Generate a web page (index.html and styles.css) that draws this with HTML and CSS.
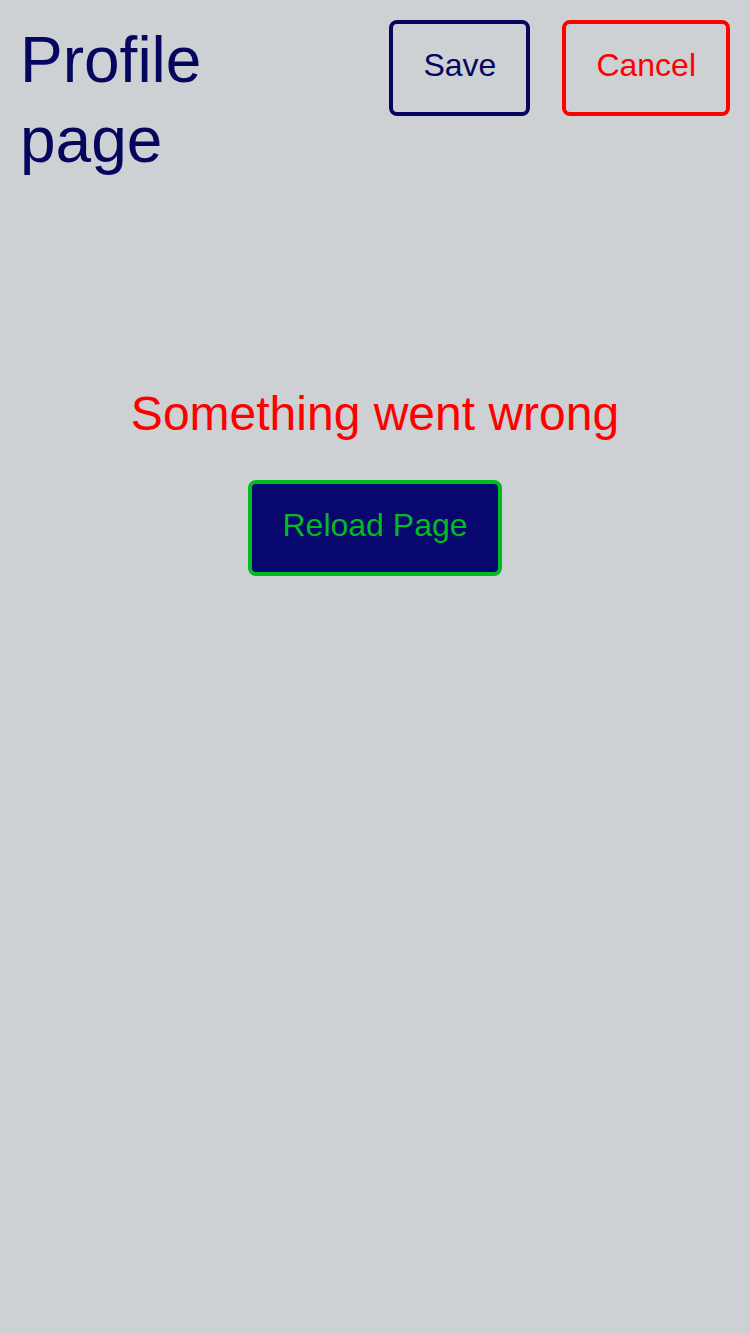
FILE: index.html
```html
<!DOCTYPE html>
<html lang="en">
<head>
<meta charset="utf-8">
<title>Profile page</title>
<link rel="stylesheet" href="styles.css">
</head>
<body>
<header class="header">
  <h1 class="title">Profile page</h1>
  <button class="btn btn-save" type="button">Save</button>
  <button class="btn btn-cancel" type="button">Cancel</button>
</header>
<main class="error">
  <p class="error-message">Something went wrong</p>
  <button class="btn btn-reload" type="button">Reload Page</button>
</main>
</body>
</html>
```

FILE: styles.css
```css
html, body {
  margin: 0;
  padding: 0;
}

body {
  background: #cdd1d4;
  font-family: "Liberation Sans", Arial, sans-serif;
  min-height: 1334px;
}

.header {
  display: flex;
  align-items: flex-start;
  gap: 32px;
  padding: 20px;
}

.title {
  flex: 1;
  margin: 0;
  font-size: 64px;
  line-height: 80px;
  font-weight: normal;
  color: #06065e;
}

.btn {
  font-family: "Liberation Sans", Arial, sans-serif;
  font-size: 32px;
  line-height: normal;
  padding: 23px 30px 28px;
  border: 4px solid;
  border-radius: 8px;
  background: transparent;
  flex: none;
  cursor: pointer;
}

.btn-save {
  color: #06065e;
  border-color: #06065e;
}

.btn-cancel {
  color: #ff0000;
  border-color: #ff0000;
}

.error {
  display: flex;
  flex-direction: column;
  align-items: center;
  margin-top: 186px;
}

.error-message {
  margin: 0 0 39px;
  font-size: 48px;
  line-height: normal;
  color: #ff0000;
}

.btn-reload {
  background: #07076e;
  color: #00bb22;
  border-color: #00bb22;
}
```
